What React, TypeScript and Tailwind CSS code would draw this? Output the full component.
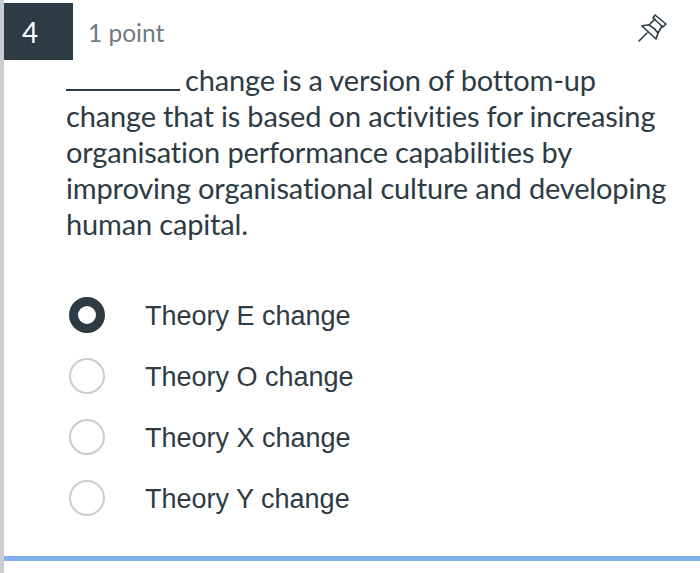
export default function App() {
  const options = ["Theory E change", "Theory O change", "Theory X change", "Theory Y change"];
  return (
    <div className="w-[700px] h-[573px] flex bg-white overflow-hidden font-['Lato',sans-serif]">
      <div className="w-1 h-full bg-[#c9ccd1]" />
      <div className="flex-1 flex flex-col pt-[3px]">
        <div className="flex h-[57px]">
          <div className="w-[69px] h-full bg-[#2d3b45] text-white text-[28px] flex items-center justify-center pr-[17px]">4</div>
          <div className="ml-[15px] text-[24.5px] text-[#6f7a83] leading-[59px]">1 point</div>
          <div className="ml-auto mr-[32px] mt-[9px]">
            <svg width="32" height="32" viewBox="0 0 32 32" fill="none" stroke="#2d3b45" strokeWidth="1.6" strokeLinejoin="round" strokeLinecap="round">
              <path d="M3 29 L11 21" />
              <path d="M19 3 L30 12 L27 15 L17 6 Z" />
              <path d="M19 7 L13 13" />
              <path d="M26 14 L22 21" />
              <path d="M6 14 C9 13 12 13 13 13 C17 15 20 18 22 21 C21.5 23 20.5 25 20 27 Z" />
            </svg>
          </div>
        </div>
        <div className="ml-[62px] mt-[1px] w-[610px] text-[29px] leading-[36px] text-[#2d3b45] tracking-[-0.16px]">
          <p>
            <span className="inline-block w-[114px] border-b-2 border-[#2d3b45] h-[30px] mr-[5px] align-baseline" />
            change is a version of bottom-up change that is based on activities for increasing organisation performance capabilities by improving organisational culture and developing human capital.
          </p>
        </div>
        <div className="ml-[65px] mt-[56px] flex flex-col gap-[25px]">
          {options.map((o, i) => (
            <div key={o} className="flex items-center h-9 font-['Liberation_Sans',sans-serif] text-[27px] text-[#2d3b45]">
              <span className={i === 0 ? "w-9 h-9 -translate-y-px rounded-full border-[9px] border-[#2d3b45] bg-white" : "w-9 h-9 -translate-y-px rounded-full border-2 border-[#c7cdd1] bg-white"} />
              <span className="ml-[40px]">{o}</span>
            </div>
          ))}
        </div>
        <div className="mt-auto mb-3 h-[5px] bg-[#7fb0ea]" />
      </div>
    </div>
  );
}
